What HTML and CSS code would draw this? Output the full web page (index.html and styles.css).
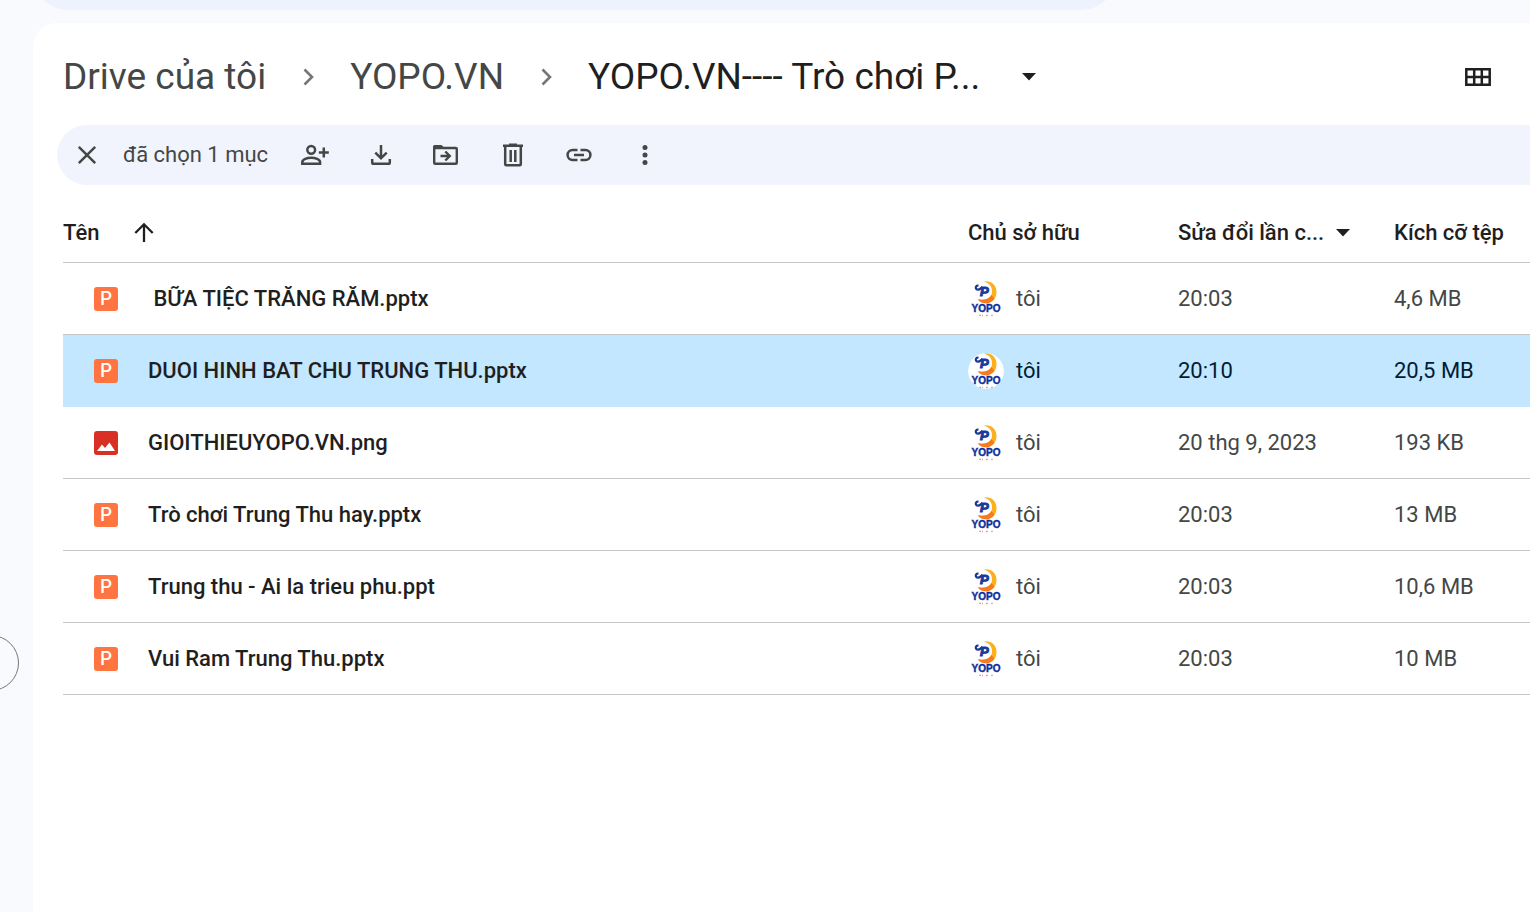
FILE: index.html
```html
<!DOCTYPE html>
<html lang="vi">
<head>
<meta charset="utf-8">
<title>YOPO.VN - Drive</title>
<link rel="stylesheet" href="styles.css">
</head>
<body>
<header class="topbar">
  <input class="search" type="search" aria-label="Tìm trong Drive">
</header>

<div class="body">
  <aside class="rail"><button class="rail-button" aria-label="Mở bảng điều hướng"></button></aside>
  <main class="panel">
    <div class="heading">
      <nav class="crumbs" aria-label="Đường dẫn">
        <a class="crumb" href="#">Drive của tôi</a>
        <svg class="icon chevron" viewBox="0 0 30 30"><path d="M11.500 7.500 19 15l-7.500 7.500" fill="none" stroke="currentColor" stroke-width="2.600"/></svg>
        <a class="crumb" href="#">YOPO.VN</a>
        <svg class="icon chevron" viewBox="0 0 30 30"><path d="M11.500 7.500 19 15l-7.500 7.500" fill="none" stroke="currentColor" stroke-width="2.600"/></svg>
        <button class="crumb current"><span class="crumb-label">YOPO.VN---- Trò chơi P...</span><svg class="caret" viewBox="0 0 14 8"><path d="M0 0h14L7 7.500z" fill="currentColor"/></svg></button>
      </nav>
      <button class="icon-button" aria-label="Bố cục lưới">
        <svg class="icon" viewBox="0 0 30 30"><path d="M3.300 7.300h23.400v15.400H3.300zM3 15h24M11.200 7v16M18.800 7v16" fill="none" stroke="currentColor" stroke-width="2.500"/></svg>
      </button>
    </div>

    <div class="toolbar">
      <button class="icon-button" aria-label="Bỏ chọn">
        <svg class="icon" viewBox="0 0 30 30"><path d="m6.800 6.800 16.400 16.400m0-16.400L6.800 23.200" fill="none" stroke="currentColor" stroke-width="2.500"/></svg>
      </button>
      <span class="count">đã chọn 1 mục</span>
      <div class="actions">
        <button class="icon-button" aria-label="Chia sẻ">
          <svg class="icon" viewBox="0 0 30 30" fill="none" stroke="currentColor" stroke-width="2.500"><circle cx="11.200" cy="9.800" r="3.900"/><path d="M2.300 23.800v-1.600c0-2.800 4.800-4.500 8.900-4.500s8.900 1.700 8.900 4.500v1.600zM23.800 7.500v10M18.800 12.500h10"/></svg>
        </button>
        <button class="icon-button" aria-label="Tải xuống">
          <svg class="icon" viewBox="0 0 30 30" fill="none" stroke="currentColor" stroke-width="2.500"><path d="M15 5v13M9.300 12.600 15 18.300l5.700-5.700M6.200 19v3.500q0 1.300 1.300 1.300h15q1.300 0 1.300-1.300V19"/></svg>
        </button>
        <button class="icon-button" aria-label="Di chuyển">
          <svg class="icon" viewBox="0 0 30 30" fill="none" stroke="currentColor" stroke-width="2.400"><path d="M2.200 8h21.600q1 0 1 1v13.800q0 1-1 1H3.200q-1 0-1-1z"/><path d="M1 9V6.500Q1 5 2.500 5h7L12.500 8z" fill="currentColor" stroke="none"/><path d="M8.500 16h8.500M13.300 11.500l4.500 4.500-4.500 4.500"/></svg>
        </button>
        <button class="icon-button" aria-label="Xóa">
          <svg class="icon" viewBox="0 0 30 30" fill="none" stroke="currentColor" stroke-width="2.500"><path d="M5 5.800h20M11 4.800h8"/><path d="M7.200 6v18.200q0 1 1 1h13.600q1 0 1-1V6M12.700 10v12M17.300 10v12"/></svg>
        </button>
        <button class="icon-button" aria-label="Nhận đường liên kết">
          <svg class="icon" viewBox="0 0 30 30" fill="none" stroke="currentColor" stroke-width="2.500"><path d="M13.500 10H8.600a5 5 0 0 0 0 10h4.900M16.500 10h4.900a5 5 0 0 1 0 10h-4.900M10 15h10"/></svg>
        </button>
        <button class="icon-button" aria-label="Thao tác khác">
          <svg class="icon" viewBox="0 0 30 30" fill="currentColor"><circle cx="15" cy="7.500" r="2.500"/><circle cx="15" cy="15" r="2.500"/><circle cx="15" cy="22.500" r="2.500"/></svg>
        </button>
      </div>
    </div>

    <table class="files">
      <colgroup><col><col class="col-owner"><col class="col-date"><col class="col-size"></colgroup>
      <thead>
        <tr>
          <th scope="col"><button class="sort">Tên <svg class="icon" viewBox="0 0 30 30"><path d="M15 24V6.500M6.300 15 15 6.300l8.700 8.700" fill="none" stroke="currentColor" stroke-width="2.300"/></svg></button></th>
          <th scope="col">Chủ sở hữu</th>
          <th scope="col"><button class="sort date">Sửa đổi lần c... <svg class="caret" viewBox="0 0 14 8"><path d="M0 0h14L7 7.500z" fill="currentColor"/></svg></button></th>
          <th scope="col">Kích cỡ tệp</th>
        </tr>
      </thead>
      <tbody>
        <tr>
          <td><div class="file"><span class="type">P</span><span class="name">&nbsp;BỮA TIỆC TRĂNG RĂM.pptx</span></div></td>
          <td><div class="owner"><svg class="avatar" viewBox="0 0 36 36"><g id="logo">
            <circle cx="18" cy="18" r="18" fill="#fff"/>
            <path d="M16 .500c7.500-1 12.500 4 12.500 10.500 0 6.800-4.600 11.300-10.500 11.300-3.600 0-6.500-1.500-8.200-4 7.500 1.500 14.200-.8 14.200-8 0-5-3-8.300-8-9.800z" fill="#fbb01c"/>
            <path d="M9.800 18.300c6 1.200 11.500 0 13.600-4.300 1.300 1.500 2.300 2.700 2.900 4.100-2 2.700-5 4.200-8.300 4.200-3.600 0-6.500-1.500-8.200-4z" fill="#f47b20"/>
            <path d="M10.500 4.800c-1.900-.5-3.200 1-2.600 2.600.6 1.500 3 1.700 4.500.2l2-1.800" fill="none" stroke="#173a9c" stroke-width="2.200"/>
            <text x="12" y="15" class="logo-mark">P</text>
            <text x="18" y="31" class="logo-name" text-anchor="middle">YOPO</text>
            <path d="M11 34.500h2m1 0h1m3 0h2m3 0h2" stroke="#f3a186" stroke-width="1.600"/>
          </g></svg>tôi</div></td><td>20:03</td><td>4,6 MB</td>
        </tr>
        <tr class="selected">
          <td><div class="file"><span class="type">P</span><span class="name">DUOI HINH BAT CHU TRUNG THU.pptx</span></div></td>
          <td><div class="owner"><svg class="avatar" viewBox="0 0 36 36"><use href="#logo"/></svg>tôi</div></td><td>20:10</td><td>20,5 MB</td>
        </tr>
        <tr>
          <td><div class="file"><span class="type image"><svg viewBox="0 0 24 24"><path d="M3 20l5-6.500 3 3.500 4.500-5.500L21 20z" fill="#fff"/></svg></span><span class="name">GIOITHIEUYOPO.VN.png</span></div></td>
          <td><div class="owner"><svg class="avatar" viewBox="0 0 36 36"><use href="#logo"/></svg>tôi</div></td><td>20 thg 9, 2023</td><td>193 KB</td>
        </tr>
        <tr>
          <td><div class="file"><span class="type">P</span><span class="name">Trò chơi Trung Thu hay.pptx</span></div></td>
          <td><div class="owner"><svg class="avatar" viewBox="0 0 36 36"><use href="#logo"/></svg>tôi</div></td><td>20:03</td><td>13 MB</td>
        </tr>
        <tr>
          <td><div class="file"><span class="type">P</span><span class="name">Trung thu - Ai la trieu phu.ppt</span></div></td>
          <td><div class="owner"><svg class="avatar" viewBox="0 0 36 36"><use href="#logo"/></svg>tôi</div></td><td>20:03</td><td>10,6 MB</td>
        </tr>
        <tr>
          <td><div class="file"><span class="type">P</span><span class="name">Vui Ram Trung Thu.pptx</span></div></td>
          <td><div class="owner"><svg class="avatar" viewBox="0 0 36 36"><use href="#logo"/></svg>tôi</div></td><td>20:03</td><td>10 MB</td>
        </tr>
      </tbody>
    </table>
  </main>
</div>
</body>
</html>
```
FILE: styles.css
```css
* { box-sizing: border-box; }

body {
  margin: 0;
  min-height: 100vh;
  display: flex;
  flex-direction: column;
  background: #f8fafd;
  color: #1f1f1f;
  font: 22px/28px Roboto, "Noto Sans", sans-serif;
}

button {
  padding: 0;
  border: 0;
  background: none;
  color: inherit;
  font: inherit;
}

.icon { display: block; flex: none; width: 30px; height: 30px; }

.topbar {
  display: flex;
  align-items: flex-end;
  height: 23px;
  padding: 0 32px 13px;
  overflow: hidden;
}
.search {
  flex: none;
  width: 74%;
  height: 72px;
  border: 0;
  border-radius: 36px;
  background: #edf2fc;
}

.body { flex: 1; display: flex; }
.rail {
  flex: none;
  display: flex;
  align-items: center;
  justify-content: flex-end;
  width: 33px;
  padding: 390px 14px 0 0;
}
.rail-button {
  flex: none;
  width: 56px;
  height: 56px;
  border: 1px solid #747775;
  border-radius: 50%;
}

.panel {
  flex: 1;
  min-width: 0;
  padding: 24px 0 0 24px;
  border-radius: 24px 0 0 0;
  background: #fff;
}

.heading {
  display: flex;
  align-items: center;
  justify-content: space-between;
  height: 60px;
  padding: 0 28px 0 6px;
}
.crumbs { display: flex; align-items: center; gap: 27px; }
.crumb {
  color: #444746;
  font-size: 37px;
  line-height: 48px;
  text-decoration: none;
  white-space: nowrap;
}
.current { display: flex; align-items: center; gap: 26px; color: #1f1f1f; }
.crumb-label { min-width: 408px; text-align: left; }
.chevron { color: #747775; }
.caret { flex: none; width: 14px; height: 8px; }

.icon-button {
  flex: none;
  display: grid;
  place-items: center;
  width: 48px;
  height: 48px;
  border-radius: 50%;
}

.toolbar {
  display: flex;
  align-items: center;
  gap: 12px;
  height: 60px;
  margin-top: 18px;
  padding-left: 6px;
  border-radius: 30px 0 0 30px;
  background: #f1f4fc;
  color: #444746;
}
.count { min-width: 156px; white-space: nowrap; }
.actions { display: flex; gap: 18px; }

.files {
  width: calc(100% - 6px);
  margin: 18px 0 0 6px;
  border-spacing: 0;
  table-layout: fixed;
  color: #444746;
}
.col-owner { width: 210px; }
.col-date { width: 216px; }
.col-size { width: 136px; }
.files th, .files td {
  padding: 0;
  border-bottom: 1px solid #c4c7c5;
  text-align: left;
  white-space: nowrap;
}
.files th { height: 60px; color: #1f1f1f; font-weight: 500; }
.files td { height: 72px; }
.files .selected td { border-color: #c2e7ff; background: #c2e7ff; color: #001d35; }

.sort { display: flex; align-items: center; gap: 30px; font-weight: 500; }
.date { gap: 12px; }

.file { display: flex; align-items: center; gap: 30px; padding-left: 31px; }
.name { color: #1f1f1f; font-weight: 500; }
.type {
  display: grid;
  place-items: center;
  width: 24px;
  height: 24px;
  border-radius: 3px;
  background: #ff7440;
  color: #fff;
  font: 500 19px/24px Inter, sans-serif;
}
.image { background: #d93025; }

.owner { display: flex; align-items: center; gap: 12px; }
.avatar { width: 36px; height: 36px; border-radius: 50%; }
.logo-mark {
  fill: #173a9c;
  stroke: #173a9c;
  font: italic 900 13px "Liberation Sans", sans-serif;
}
.logo-name {
  fill: #0a2f9e;
  stroke: #0a2f9e;
  stroke-width: 0.4px;
  font: 700 10px "Liberation Sans", sans-serif;
}
```
